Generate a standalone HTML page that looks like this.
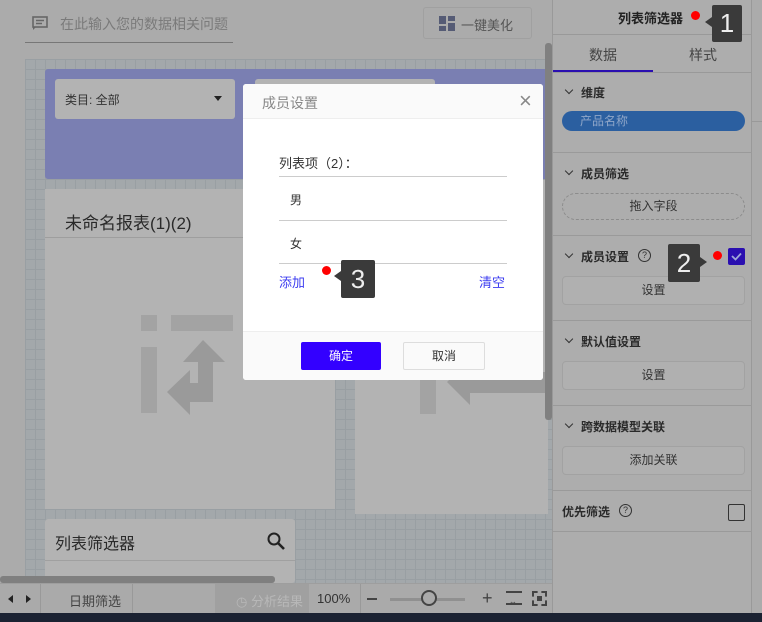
<!DOCTYPE html>
<html><head><meta charset="utf-8"><style>
*{box-sizing:border-box;margin:0;padding:0}
body{width:762px;height:622px;overflow:hidden;position:relative;background:#ababab;font-family:"Liberation Sans","Noto Sans CJK SC",sans-serif;color:#333}
.a{position:absolute}
.grid{background-color:#a3a8ab;background-image:linear-gradient(#999fa3 1px,transparent 1px),linear-gradient(90deg,#999fa3 1px,transparent 1px);background-size:10px 10px}
.card{background:#b3b3b3}
.sec{font-size:12px;color:#2a2a2a;font-weight:bold}
.btn{background:#b0b0b0;border:1px solid #a2a2a2;border-radius:4px;font-size:12px;color:#333;text-align:center;line-height:26px}
.hl{height:1px;background:#9a9a9a}
.chev{width:6px;height:6px;border-right:1.5px solid #333;border-bottom:1.5px solid #333;transform:rotate(45deg)}
.badge{background:#3a3a3a;color:#eee;font-size:26px;text-align:center;border-radius:2px}
.dot{width:9px;height:9px;border-radius:50%;background:#f00}
.q{width:13px;height:13px;border:1.3px solid #333;border-radius:50%;font-size:9px;text-align:center;line-height:11px}
</style></head><body>
<svg class="a" style="left:32px;top:16px" width="16" height="14" viewBox="0 0 16 14"><rect x="1" y="1" width="14" height="10" fill="none" stroke="#666" stroke-width="1.6"/><path d="M1 11 L1 14 L4 11" fill="#666"/><path d="M4 4.5h8M4 7.5h6" stroke="#666" stroke-width="1.4"/></svg>
<div class="a" style="left:60px;top:14px;font-size:14px;color:#7a7a7a">在此输入您的数据相关问题</div>
<div class="a" style="left:25px;top:42px;width:208px;height:1px;background:#777"></div>
<div class="a" style="left:423px;top:7px;width:109px;height:32px;border:1px solid #a0a0a0;border-radius:3px"></div>
<svg class="a" style="left:439px;top:16px" width="16" height="15"><rect x="0" y="0" width="7" height="8" fill="#555b75"/><rect x="9" y="0" width="7" height="5" fill="#555b75"/><rect x="0" y="10" width="7" height="5" fill="#555b75"/><rect x="9" y="7" width="7" height="8" fill="#555b75"/></svg>
<div class="a" style="left:461px;top:15px;font-size:13px;color:#555">一键美化</div>
<div class="a grid" style="left:25px;top:59px;width:527px;height:524px"></div>
<div class="a" style="left:45px;top:69px;width:507px;height:110px;background:#7a7fb2;border-radius:3px"></div>
<div class="a card" style="left:55px;top:79px;width:180px;height:40px;border-radius:3px"></div>
<div class="a" style="left:65px;top:91px;font-size:12px;color:#333">类目: 全部</div>
<div class="a" style="left:214px;top:96px;border-left:4px solid transparent;border-right:4px solid transparent;border-top:5px solid #222"></div>
<div class="a card" style="left:255px;top:79px;width:180px;height:40px;border-radius:3px"></div>
<div class="a card" style="left:45px;top:189px;width:290px;height:320px"></div>
<div class="a" style="left:65px;top:209px;font-size:17px;color:#2a2a2a">未命名报表(1)(2)</div>
<div class="a" style="left:45px;top:237px;width:290px;height:1px;background:#9e9e9e"></div>
<div class="a" style="left:141px;top:315px;width:16px;height:16px;background:#a3a3a3"></div>
<div class="a" style="left:141px;top:347px;width:16px;height:66px;background:#a3a3a3"></div>
<div class="a" style="left:171px;top:315px;width:62px;height:16px;background:#a3a3a3"></div>
<svg class="a" style="left:165px;top:340px" width="80" height="80"><path d="M38 0 L60 22 L48 22 L48 62 L25 62 L25 75 L2 52 L25 30 L25 43 L33 43 L33 22 L18 22 Z" fill="#9a9a9a"/></svg>
<div class="a card" style="left:355px;top:180px;width:193px;height:334px"></div>
<div class="a" style="left:420px;top:375px;width:16px;height:39px;background:#a3a3a3"></div>
<svg class="a" style="left:445px;top:360px" width="100" height="60"><path d="M25 0 L25 12 L100 12 L100 33 L25 33 L25 45 L2 22 Z" fill="#9a9a9a"/></svg>
<div class="a card" style="left:45px;top:519px;width:250px;height:64px;border-radius:3px"></div>
<div class="a" style="left:55px;top:530px;font-size:16px;color:#2a2a2a">列表筛选器</div>
<svg class="a" style="left:266px;top:531px" width="20" height="20"><circle cx="8" cy="8" r="5.5" fill="none" stroke="#222" stroke-width="2"/><path d="M12 12 L18 18" stroke="#222" stroke-width="2.6"/></svg>
<div class="a" style="left:45px;top:560px;width:250px;height:1px;background:#a0a0a0"></div>
<div class="a" style="left:545px;top:43px;width:7px;height:377px;background:#808080;border-radius:3px"></div>
<div class="a" style="left:0;top:576px;width:275px;height:7px;background:#7f7f7f;border-radius:3px"></div>
<div class="a" style="left:0;top:583px;width:552px;height:30px;background:#aaa;border-top:1px solid #9e9e9e"></div>
<div class="a" style="left:8px;top:595px;border-top:4px solid transparent;border-bottom:4px solid transparent;border-right:5px solid #222"></div>
<div class="a" style="left:26px;top:595px;border-top:4px solid transparent;border-bottom:4px solid transparent;border-left:5px solid #222"></div>
<div class="a" style="left:40px;top:584px;width:1px;height:29px;background:#999"></div>
<div class="a" style="left:69px;top:591px;font-size:13px;color:#444">日期筛选</div>
<div class="a" style="left:132px;top:584px;width:1px;height:29px;background:#999"></div>
<div class="a" style="left:215px;top:584px;width:94px;height:29px;background:#a0a0a0"></div>
<div class="a" style="left:236px;top:591px;font-size:13px;color:#b8b8b8">◷ 分析结果</div>
<div class="a" style="left:317px;top:591px;font-size:13px;color:#333">100%</div>
<div class="a" style="left:360px;top:584px;width:1px;height:29px;background:#999"></div>
<div class="a" style="left:367px;top:598px;width:10px;height:2px;background:#444"></div>
<div class="a" style="left:390px;top:598px;width:75px;height:3px;background:#909090"></div>
<div class="a" style="left:421px;top:590px;width:16px;height:16px;border:2px solid #444;border-radius:50%;background:#aaa"></div>
<div class="a" style="left:482px;top:590px;font-size:18px;color:#444;line-height:16px">+</div>
<div class="a" style="left:506px;top:591px;width:16px;height:14px;border-top:2px solid #444;border-bottom:2px solid #444"></div>
<div class="a" style="left:509px;top:597px;font-size:8px;color:#444">↔</div>
<div class="a" style="left:532px;top:591px;width:15px;height:15px;border:2px dashed #444"></div>
<div class="a" style="left:537px;top:596px;width:5px;height:5px;background:#444"></div>
<div class="a" style="left:0;top:613px;width:762px;height:9px;background:#1b2232"></div>
<div class="a" style="left:552px;top:0;width:200px;height:613px;background:#adadad;border-left:1px solid #999;border-right:1px solid #999"></div>
<div class="a" style="left:752px;top:0;width:10px;height:613px;background:#ababab"></div>
<div class="a" style="left:752px;top:121px;width:10px;height:1px;background:#999"></div>
<div class="a" style="left:618px;top:8px;font-size:13px;font-weight:bold;color:#222">列表筛选器</div>
<div class="a" style="left:552px;top:34px;width:200px;height:1px;background:#999"></div>
<div class="a" style="left:589px;top:45px;font-size:14px;color:#444">数据</div>
<div class="a" style="left:689px;top:45px;font-size:14px;color:#444">样式</div>
<div class="a" style="left:553px;top:70px;width:100px;height:2px;background:#2a0fb0"></div>
<div class="a" style="left:552px;top:72px;width:200px;height:1px;background:#999"></div>
<div class="a chev" style="left:566px;top:87px"></div><div class="a sec" style="left:581px;top:84px">维度</div>
<div class="a" style="left:562px;top:111px;width:183px;height:20px;background:#2b5fa0;border-radius:10px;font-size:12px;color:#8fa6c8;padding-left:18px;line-height:20px">产品名称</div>
<div class="a hl" style="left:553px;top:152px;width:199px"></div>
<div class="a chev" style="left:566px;top:168px"></div><div class="a sec" style="left:581px;top:165px">成员筛选</div>
<div class="a" style="left:562px;top:193px;width:183px;height:27px;border:1px dashed #8c8c8c;border-radius:14px;font-size:12px;text-align:center;line-height:25px;color:#333">拖入字段</div>
<div class="a hl" style="left:553px;top:235px;width:199px"></div>
<div class="a chev" style="left:566px;top:251px"></div><div class="a sec" style="left:581px;top:248px">成员设置</div>
<div class="a q" style="left:638px;top:249px">?</div>
<div class="a" style="left:728px;top:248px;width:17px;height:17px;background:#2a0fb0;border-radius:2px"></div>
<svg class="a" style="left:731px;top:252px" width="11" height="9"><path d="M1 4 L4.5 7.5 L10 1.5" fill="none" stroke="#9fa8d8" stroke-width="1.8"/></svg>
<div class="a btn" style="left:562px;top:276px;width:183px;height:29px">设置</div>
<div class="a hl" style="left:553px;top:320px;width:199px"></div>
<div class="a chev" style="left:566px;top:336px"></div><div class="a sec" style="left:581px;top:333px">默认值设置</div>
<div class="a btn" style="left:562px;top:361px;width:183px;height:29px">设置</div>
<div class="a hl" style="left:553px;top:405px;width:199px"></div>
<div class="a chev" style="left:566px;top:421px"></div><div class="a sec" style="left:581px;top:418px">跨数据模型关联</div>
<div class="a btn" style="left:562px;top:446px;width:183px;height:29px">添加关联</div>
<div class="a hl" style="left:553px;top:490px;width:199px"></div>
<div class="a sec" style="left:562px;top:503px">优先筛选</div>
<div class="a q" style="left:619px;top:504px">?</div>
<div class="a" style="left:728px;top:504px;width:17px;height:17px;border:1.3px solid #333;border-radius:2px"></div>
<div class="a hl" style="left:553px;top:531px;width:199px"></div>
<div class="a" style="left:243px;top:84px;width:300px;height:296px;background:#fff;border-radius:3px;overflow:hidden">
 <div class="a" style="left:0;top:0;width:300px;height:35px;background:#fafafa;border-bottom:1px solid #eee"></div>
 <div class="a" style="left:19px;top:9px;font-size:14px;color:#888">成员设置</div>
 <div class="a" style="left:276px;top:4px;font-size:22px;color:#888;font-weight:300">×</div>
 <div class="a" style="left:36px;top:69px;font-size:13px;color:#333">列表项（2）：</div>
 <div class="a" style="left:36px;top:92px;width:228px;height:1px;background:#ccc"></div>
 <div class="a" style="left:47px;top:107px;font-size:12px;color:#333">男</div>
 <div class="a" style="left:36px;top:136px;width:228px;height:1px;background:#ccc"></div>
 <div class="a" style="left:47px;top:151px;font-size:12px;color:#333">女</div>
 <div class="a" style="left:36px;top:179px;width:228px;height:1px;background:#ccc"></div>
 <div class="a" style="left:36px;top:188px;font-size:13px;color:#3d3df0">添加</div>
 <div class="a" style="left:236px;top:188px;font-size:13px;color:#3d3df0">清空</div>
 <div class="a" style="left:0;top:247px;width:300px;height:49px;background:#fafafa;border-top:1px solid #eee"></div>
 <div class="a" style="left:58px;top:258px;width:80px;height:28px;background:#3300ff;border-radius:2px;color:#fff;font-size:12px;text-align:center;line-height:28px">确定</div>
 <div class="a" style="left:160px;top:258px;width:82px;height:28px;background:#fafafa;border:1px solid #ddd;border-radius:2px;color:#333;font-size:12px;text-align:center;line-height:26px">取消</div>
</div>
<div class="a dot" style="left:691px;top:11px"></div>
<div class="a" style="left:705px;top:17px;border-top:5px solid transparent;border-bottom:5px solid transparent;border-right:7px solid #3a3a3a"></div>
<div class="a badge" style="left:712px;top:5px;width:30px;height:37px;line-height:37px">1</div>
<div class="a dot" style="left:713px;top:251px"></div>
<div class="a" style="left:700px;top:257px;border-top:5px solid transparent;border-bottom:5px solid transparent;border-left:7px solid #3a3a3a"></div>
<div class="a badge" style="left:668px;top:244px;width:32px;height:38px;line-height:38px">2</div>
<div class="a dot" style="left:322px;top:266px"></div>
<div class="a" style="left:334px;top:271px;border-top:5px solid transparent;border-bottom:5px solid transparent;border-right:7px solid #3a3a3a"></div>
<div class="a badge" style="left:341px;top:260px;width:34px;height:38px;line-height:38px">3</div>
</body></html>
